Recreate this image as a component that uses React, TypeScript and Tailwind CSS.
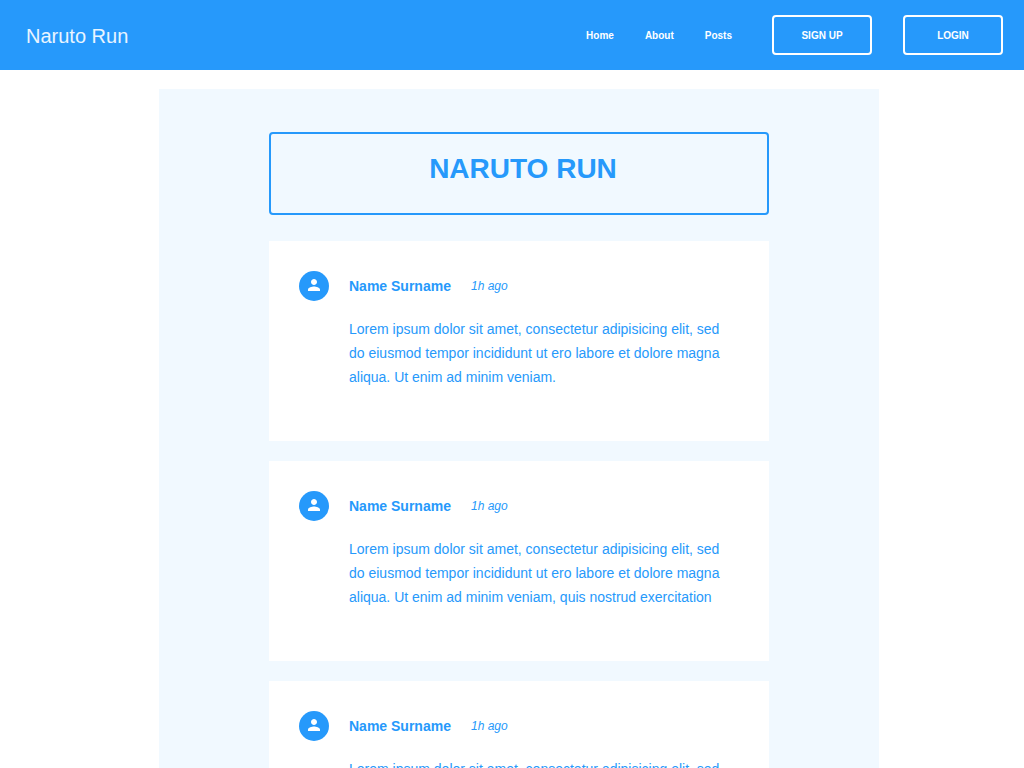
const posts = [
  ["Lorem ipsum dolor sit amet, consectetur adipisicing elit, sed", "do eiusmod tempor incididunt ut ero labore et dolore magna", "aliqua. Ut enim ad minim veniam."],
  ["Lorem ipsum dolor sit amet, consectetur adipisicing elit, sed", "do eiusmod tempor incididunt ut ero labore et dolore magna", "aliqua. Ut enim ad minim veniam, quis nostrud exercitation"],
  ["Lorem ipsum dolor sit amet, consectetur adipisicing elit, sed", "do eiusmod tempor incididunt ut ero labore et dolore magna", "aliqua. Ut enim ad minim veniam."],
];

function Avatar() {
  return (
    <span className="flex size-[30px] shrink-0 items-center justify-center rounded-full bg-[#2699fb] pb-0.5">
      <svg className="size-[18px]" viewBox="0 0 24 24" fill="white">
        <path d="M12 12c2.21 0 4-1.79 4-4s-1.79-4-4-4-4 1.79-4 4 1.79 4 4 4zm0 2c-2.67 0-8 1.34-8 4v2h16v-2c0-2.66-5.33-4-8-4z" />
      </svg>
    </span>
  );
}

function Post({ lines }: { lines: string[] }) {
  return (
    <article className="h-[200px] bg-white px-[30px] pt-[30px]">
      <header className="flex h-[30px] items-center">
        <Avatar />
        <h2 className="ml-5 w-[122px] text-sm font-bold">Name Surname</h2>
        <time className="text-xs italic">1h ago</time>
      </header>
      <div className="mt-4 pl-[50px] text-sm leading-6 whitespace-nowrap">
        {lines.map((line) => (
          <p key={line}>{line}</p>
        ))}
      </div>
    </article>
  );
}

export default function App() {
  return (
    <div className="h-screen overflow-hidden bg-white font-['Liberation_Sans',Arial,sans-serif] text-[#2699fb]">
      <header className="flex h-[70px] items-center justify-between bg-[#2699fb] pr-[21px] pl-[26px] text-white">
        <div className="pt-0.5 text-xl leading-6 text-white/90">Naruto Run</div>
        <div className="flex items-center text-[10px] font-bold">
          <nav className="flex gap-[31px] pr-10">
            <a href="#home">Home</a>
            <a href="#about">About</a>
            <a href="#posts">Posts</a>
          </nav>
          <div className="flex gap-[31px]">
            <button className="h-10 w-[100px] rounded-[4px] border-2 border-white">SIGN UP</button>
            <button className="h-10 w-[100px] rounded-[4px] border-2 border-white">LOGIN</button>
          </div>
        </div>
      </header>
      <main className="mt-[19px] ml-[159px] h-[820px] w-[720px] bg-[#f1f9ff] px-[110px] pt-[43px]">
        <h1 className="h-[83px] rounded-[4px] border-2 border-[#2699fb] pt-[19px] pl-2 text-center text-[28px] leading-8 font-bold">
          NARUTO RUN
        </h1>
        <div className="mt-[26px] flex flex-col gap-5">
          {posts.map((lines, i) => (
            <Post key={i} lines={lines} />
          ))}
        </div>
      </main>
    </div>
  );
}
